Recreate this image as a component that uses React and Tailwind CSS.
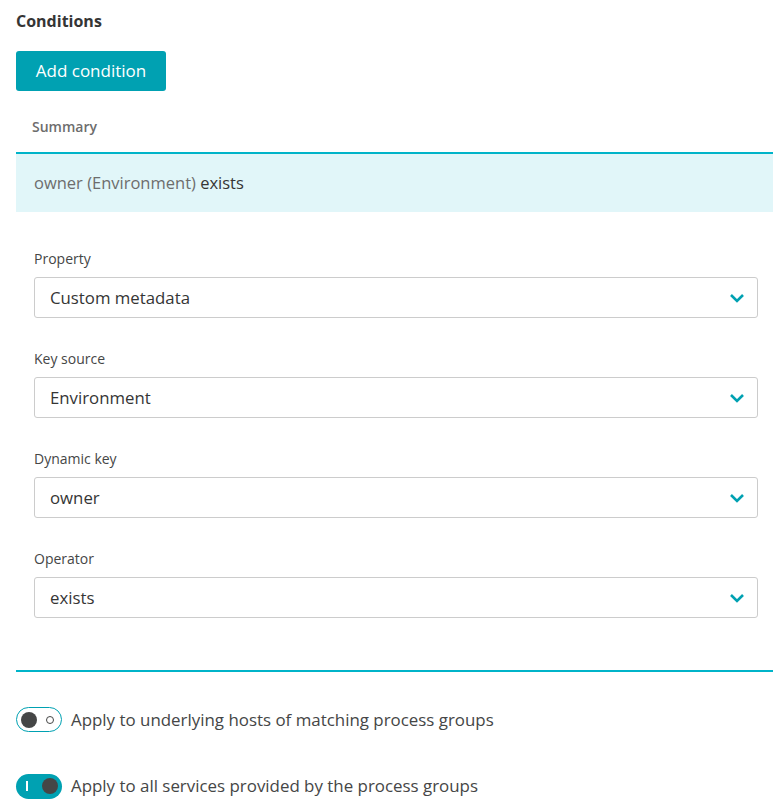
import { useState } from "react";

const FIELDS = [
  { label: "Property", value: "Custom metadata" },
  { label: "Key source", value: "Environment" },
  { label: "Dynamic key", value: "owner" },
  { label: "Operator", value: "exists" },
];

function Chevron() {
  return (
    <svg width="16" height="10" viewBox="0 0 16 10" className="text-[#00a1b2]">
      <path d="M2 2l6 6 6-6" fill="none" stroke="currentColor" strokeWidth="2.6" />
    </svg>
  );
}

function SelectField({ label, value }) {
  return (
    <div className="flex flex-col">
      <span className="text-[14px] leading-[18px] text-[#454646]">{label}</span>
      <div className="mt-[9px] flex h-[41px] items-center justify-between rounded-[3px] border border-[#cccccc] bg-white pl-[15px] pr-[12px]">
        <span className="text-[16.8px] text-[#353535]">{value}</span>
        <Chevron />
      </div>
    </div>
  );
}

function Toggle({ on, onChange, label }) {
  return (
    <label className="flex cursor-pointer items-center gap-[9px]">
      <button
        type="button"
        onClick={() => onChange(!on)}
        className={`flex h-[25px] w-[46px] items-center justify-between rounded-full px-[4px] ${
          on ? "bg-[#00a1b2]" : "border border-[#00a1b2] bg-white"
        }`}
      >
        {on ? (
          <>
            <span className="ml-[6px] h-[10px] w-[1.5px] bg-white" />
            <span className="h-[16px] w-[16px] rounded-full bg-[#454646]" />
          </>
        ) : (
          <>
            <span className="h-[16px] w-[16px] rounded-full bg-[#454646]" />
            <span className="mr-[3px] h-[8px] w-[8px] rounded-full border-[1.5px] border-[#454646]" />
          </>
        )}
      </button>
      <span className="text-[16.9px] text-[#454646]">{label}</span>
    </label>
  );
}

export default function App() {
  const [hosts, setHosts] = useState(false);
  const [services, setServices] = useState(true);

  return (
    <div
      className="min-h-screen bg-white pl-4 text-[#454646]"
      style={{ fontFamily: "'Open Sans', 'Noto Sans', sans-serif" }}
    >
      <h2 className="pt-[11px] text-[16px] font-bold leading-[20px] text-[#353535]">Conditions</h2>
      <button
        type="button"
        className="mt-[20px] h-[40px] w-[150px] rounded-[3px] bg-[#00a1b2] text-[17px] text-white"
      >
        Add condition
      </button>
      <div className="pt-[27px] pl-[16px] text-[14px] font-semibold leading-[18px] text-[#6d6d6d]">
        Summary
      </div>
      <div className="mt-[16px] border-t-2 border-[#00b4c9] bg-[#e1f6f9] py-[19px] pl-[18px] text-[16.5px] leading-[20px]">
        <span className="text-[#6d6d6d]">owner (Environment)</span>{" "}
        <span className="text-[#353535]">exists</span>
      </div>
      <div className="flex flex-col gap-[32px] pt-[38px] pl-[18px] pr-[15px] pb-[52px]">
        {FIELDS.map((f) => (
          <SelectField key={f.label} label={f.label} value={f.value} />
        ))}
      </div>
      <div className="border-t-2 border-[#00b4c9]" />
      <div className="flex flex-col gap-[41px] pt-[35px]">
        <Toggle on={hosts} onChange={setHosts} label="Apply to underlying hosts of matching process groups" />
        <Toggle on={services} onChange={setServices} label="Apply to all services provided by the process groups" />
      </div>
    </div>
  );
}
